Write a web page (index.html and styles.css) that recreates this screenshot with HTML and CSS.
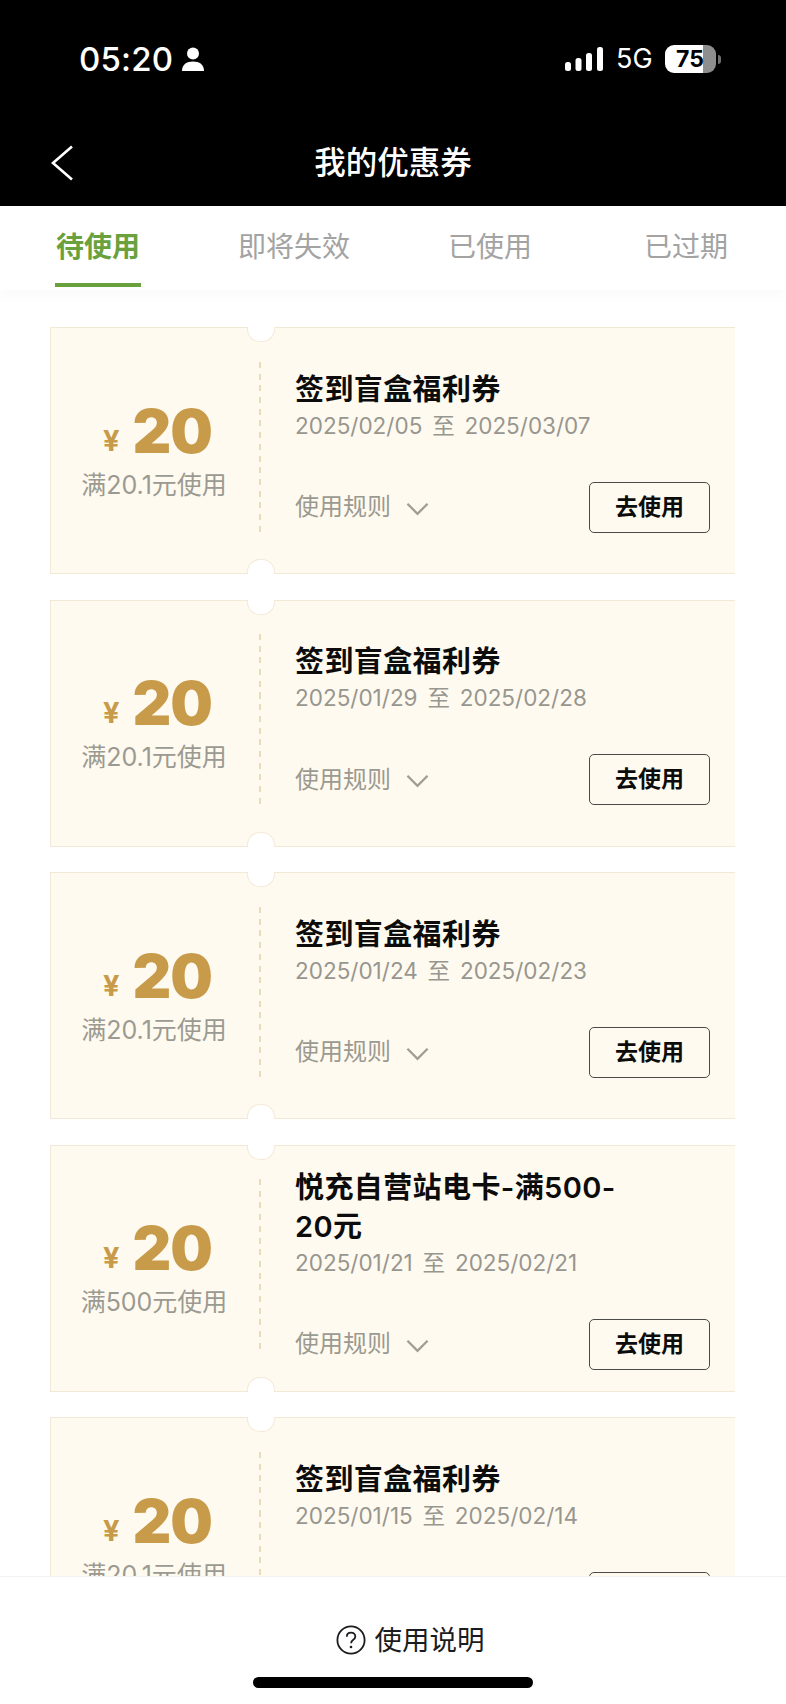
FILE: index.html
```html
<!DOCTYPE html>
<html lang="zh-CN">
<head>
<meta charset="utf-8">
<title>我的优惠券</title>
<link rel="stylesheet" href="styles.css">
</head>
<body>
<div class="app">
  <header class="top">
    <div class="status">
      <div class="status-left">
        <span class="time">05:20</span>
        <svg class="person" viewBox="0 0 22 24" width="22" height="24"><circle cx="11" cy="6.5" r="6" fill="#fff"/><path d="M0 24c0-6.5 4.5-9.5 11-9.5s11 3 11 9.5z" fill="#fff"/></svg>
      </div>
      <div class="status-right">
        <svg class="signal" viewBox="0 0 38 24" width="38" height="24"><rect x="0" y="15" width="6" height="9" rx="2.5" fill="#fff"/><rect x="10.5" y="11" width="6" height="13" rx="2.5" fill="#fff"/><rect x="21" y="6" width="6" height="18" rx="2.5" fill="#fff"/><rect x="32" y="0" width="6" height="24" rx="2.5" fill="#fff"/></svg>
        <span class="net">5G</span>
        <div class="battery"><span class="battery-level">75</span></div>
        <span class="battery-nub"></span>
      </div>
    </div>
    <div class="nav">
      <svg class="back" viewBox="0 0 24 36" width="24" height="36"><path d="M22 1.5 3 18l19 16.5" fill="none" stroke="#fff" stroke-width="2.6"/></svg>
      <h1 class="nav-title">我的优惠券</h1>
    </div>
  </header>

  <nav class="tabs">
    <div class="tab tab-active"><span class="tab-label">待使用</span></div>
    <div class="tab"><span class="tab-label">即将失效</span></div>
    <div class="tab"><span class="tab-label">已使用</span></div>
    <div class="tab"><span class="tab-label">已过期</span></div>
  </nav>

  <main class="list">
    <article class="coupon">
      <div class="value">
        <div class="amount"><span class="yen">¥</span><span class="num">20</span></div>
        <div class="cond">满20.1元使用</div>
      </div>
      <div class="divider"></div>
      <div class="info">
        <div class="name">签到盲盒福利券</div>
        <div class="date">2025/02/05 至 2025/03/07</div>
        <div class="row">
          <div class="rule"><span>使用规则</span><svg class="chev" viewBox="0 0 24 14" width="23" height="14"><path d="M1.5 1.500 12 12 22.500 1.500" fill="none" stroke="#a09d95" stroke-width="2.400"/></svg></div>
          <button class="use">去使用</button>
        </div>
      </div>
    </article>
    <article class="coupon">
      <div class="value">
        <div class="amount"><span class="yen">¥</span><span class="num">20</span></div>
        <div class="cond">满20.1元使用</div>
      </div>
      <div class="divider"></div>
      <div class="info">
        <div class="name">签到盲盒福利券</div>
        <div class="date">2025/01/29 至 2025/02/28</div>
        <div class="row">
          <div class="rule"><span>使用规则</span><svg class="chev" viewBox="0 0 24 14" width="23" height="14"><path d="M1.5 1.500 12 12 22.500 1.500" fill="none" stroke="#a09d95" stroke-width="2.400"/></svg></div>
          <button class="use">去使用</button>
        </div>
      </div>
    </article>
    <article class="coupon">
      <div class="value">
        <div class="amount"><span class="yen">¥</span><span class="num">20</span></div>
        <div class="cond">满20.1元使用</div>
      </div>
      <div class="divider"></div>
      <div class="info">
        <div class="name">签到盲盒福利券</div>
        <div class="date">2025/01/24 至 2025/02/23</div>
        <div class="row">
          <div class="rule"><span>使用规则</span><svg class="chev" viewBox="0 0 24 14" width="23" height="14"><path d="M1.5 1.500 12 12 22.500 1.500" fill="none" stroke="#a09d95" stroke-width="2.400"/></svg></div>
          <button class="use">去使用</button>
        </div>
      </div>
    </article>
    <article class="coupon">
      <div class="value">
        <div class="amount"><span class="yen">¥</span><span class="num">20</span></div>
        <div class="cond">满500元使用</div>
      </div>
      <div class="divider"></div>
      <div class="info">
        <div class="name">悦充自营站电卡-满500-20元</div>
        <div class="date">2025/01/21 至 2025/02/21</div>
        <div class="row">
          <div class="rule"><span>使用规则</span><svg class="chev" viewBox="0 0 24 14" width="23" height="14"><path d="M1.5 1.500 12 12 22.500 1.500" fill="none" stroke="#a09d95" stroke-width="2.400"/></svg></div>
          <button class="use">去使用</button>
        </div>
      </div>
    </article>
    <article class="coupon">
      <div class="value">
        <div class="amount"><span class="yen">¥</span><span class="num">20</span></div>
        <div class="cond">满20.1元使用</div>
      </div>
      <div class="divider"></div>
      <div class="info">
        <div class="name">签到盲盒福利券</div>
        <div class="date">2025/01/15 至 2025/02/14</div>
        <div class="row">
          <div class="rule"><span>使用规则</span><svg class="chev" viewBox="0 0 24 14" width="23" height="14"><path d="M1.5 1.500 12 12 22.500 1.500" fill="none" stroke="#a09d95" stroke-width="2.400"/></svg></div>
          <button class="use">去使用</button>
        </div>
      </div>
    </article>
  </main>

  <footer class="foot">
    <div class="help">
      <svg class="help-icon" viewBox="0 0 30 30" width="30" height="30"><circle cx="15" cy="15" r="13.600" fill="none" stroke="#1c1c20" stroke-width="1.800"/><path d="M10.800 11.800c0-2.600 1.900-4.200 4.300-4.200s4.200 1.600 4.200 3.800c0 1.800-1 2.700-2.300 3.600-1.300.9-1.900 1.500-1.900 3.200" fill="none" stroke="#1c1c20" stroke-width="1.800"/><circle cx="15" cy="22" r="1.300" fill="#1c1c20"/></svg>
      <span class="help-text">使用说明</span>
    </div>
    <div class="home"></div>
  </footer>
</div>
</body>
</html>
```
FILE: styles.css
```css
* { box-sizing: border-box; }
html, body { margin: 0; padding: 0; background: #fff; }
body { font-family: Inter, "Noto Sans CJK SC", sans-serif; }
.app { width: 786px; height: 1704px; display: flex; flex-direction: column; overflow: hidden; background: #fff; }

.top { background: #000; height: 206px; flex: none; color: #fff; }
.status { height: 74px; padding: 45px 65px 0 79px; display: flex; justify-content: space-between; align-items: flex-start; }
.status-left { display: flex; align-items: center; gap: 9px; height: 28px; }
.time { font-size: 33px; font-weight: 500; line-height: 28px; letter-spacing: .2px; }
.person { display: block; }
.status-right { display: flex; align-items: center; height: 28px; }
.signal { display: block; margin-left: -1px; }
.net { font-size: 27px; line-height: 28px; margin-left: 13px; width: 49px; }
.battery { width: 51px; height: 28px; border-radius: 9px; background: linear-gradient(90deg, #fff 74%, #8e8e8e 74%); color: #000; font-size: 23px; font-weight: 700; line-height: 28px; padding-left: 11px; }
.battery-level { display: block; }
.battery-nub { width: 3px; height: 9px; margin-left: 2px; border-radius: 0 3px 3px 0; background: #6e6e6e; }
.nav { display: flex; justify-content: center; height: 132px; position: relative; }
.back { position: absolute; left: 50px; top: 71px; }
.nav-title { margin: 67px 0 0; font-size: 31.500px; font-weight: 500; line-height: 44px; }

.tabs { flex: none; height: 84px; padding: 21px 2px 0 0; display: flex; background: #fff; box-shadow: 0 6px 12px rgba(0,0,0,.025); position: relative; }
.tab { flex: 1; display: flex; justify-content: center; align-items: flex-start; }
.tab-label { font-size: 28px; line-height: 40px; color: #a3a3a3; padding: 0 1px 16px; display: block; }
.tab-active .tab-label { color: #6aa13c; font-weight: 700; border-bottom: 4px solid #6aa13c; }

.list { flex: 1; min-height: 0; overflow: hidden; padding: 37px 51px 0 50px; display: flex; flex-direction: column; gap: 25.600px; }
.coupon { flex: none; height: 247px; display: flex; align-items: center; position: relative; background: #fffaef; border: 1px solid #f1e8d6; border-right: 0; }
.coupon::before, .coupon::after { content: ""; position: absolute; left: 196px; width: 26px; height: 14px; background: #fff; border: 1px solid #f3ead9; }
.coupon::before { top: -1px; border-top: 0; border-radius: 0 0 13px 13px; }
.coupon::after { bottom: -1px; border-bottom: 0; border-radius: 13px 13px 0 0; }

.value { width: 208px; flex: none; display: flex; flex-direction: column; align-items: center; }
.amount { display: flex; align-items: baseline; height: 62px; line-height: 62px; margin-left: 5px; }
.yen { font-size: 29px; font-weight: 700; color: #c79b49; margin-right: 13px; position: relative; top: -2px; }
.num { font-size: 60px; font-weight: 900; color: #c79b49; letter-spacing: -1px; }
.cond { font-size: 25px; line-height: 34px; color: #9b9a92; margin: 6px 2px 0 0; white-space: nowrap; }

.divider { flex: none; width: 2px; height: 170px; margin-bottom: 8px; background: repeating-linear-gradient(180deg, #e8dcbc 0 6px, transparent 6px 11.700px); }
.info { flex: 1; min-width: 0; padding: 1px 25px 0 34px; display: flex; flex-direction: column; }
.name { font-size: 29px; font-weight: 600; line-height: 39px; color: #0c0c0c; max-width: 340px; letter-spacing: .4px; }
.date { font-size: 22.500px; line-height: 33px; color: #97968f; word-spacing: 3.500px; }
.row { display: flex; justify-content: space-between; align-items: center; margin-top: 40px; }
.rule { display: flex; align-items: center; gap: 15px; font-size: 24px; color: #9b9a92; line-height: 34px; }
.chev { display: block; margin-top: 3px; }
.use { width: 121px; height: 51px; padding: 0; border: 1px solid #4a4a46; border-radius: 5px; background: transparent; font: 700 23px/1 Inter, "Noto Sans CJK SC", sans-serif; color: #0c0c0c; }

.foot { flex: none; height: 128px; background: #fff; border-top: 1px solid #f3f3f3; display: flex; flex-direction: column; align-items: center; position: relative; }
.help { display: flex; align-items: center; gap: 9px; margin: 47px 0 0 34px; height: 32px; }
.help-icon { display: block; }
.help-text { font-size: 27.500px; line-height: 32px; color: #1c1c20; }
.home { width: 280px; height: 11px; border-radius: 6px; background: #000; margin-top: 21px; }
```
